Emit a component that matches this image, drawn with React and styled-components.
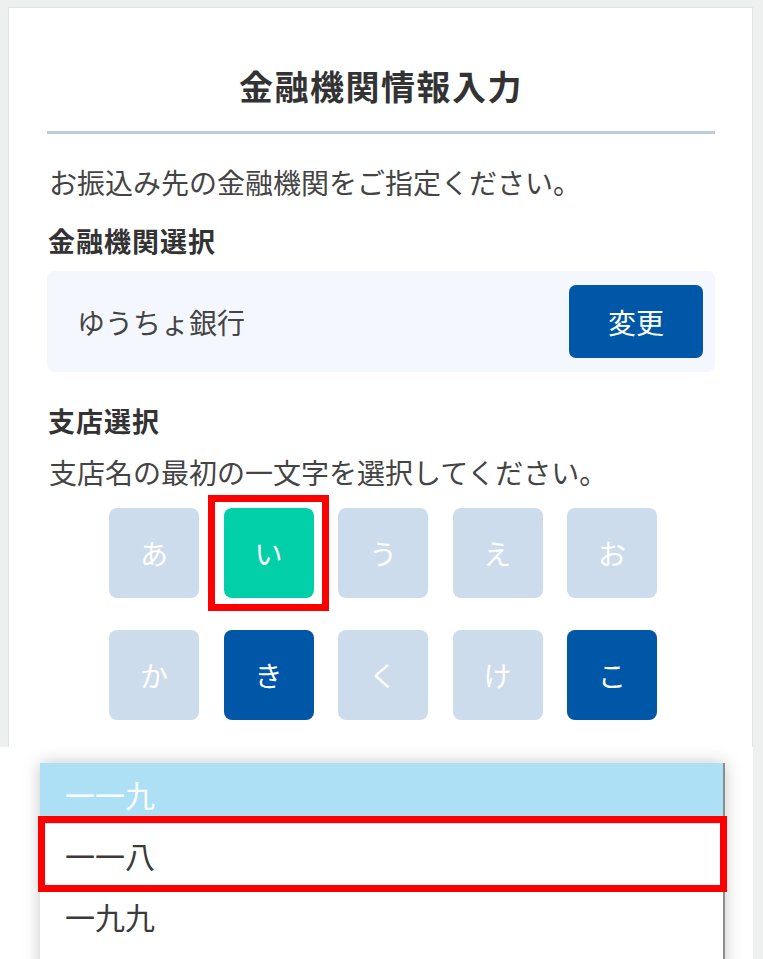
import React, { useState } from "react";
import styled, { createGlobalStyle } from "styled-components";

const GlobalStyle = createGlobalStyle`
  html, body {
    margin: 0;
    padding: 0;
    background: #eef0ef;
    font-family: "Noto Sans CJK JP", "Noto Sans", sans-serif;
    color: #3a3a3a;
  }
  * {
    box-sizing: border-box;
  }
`;

const Page = styled.div`
  position: relative;
  min-height: 100vh;
  padding: 7px 10px 0 8px;
  overflow: hidden;
`;

const Card = styled.div`
  background: #ffffff;
  border: 1px solid #e1e4e3;
  border-bottom: none;
  min-height: calc(100vh - 7px);
  padding: 56px 37px 0 38px;
  display: flex;
  flex-direction: column;
`;

const Title = styled.h1`
  margin: 0;
  font-size: 34px;
  line-height: 44px;
  font-weight: 700;
  letter-spacing: 1.5px;
  text-align: center;
  color: #333333;
  padding-bottom: 23px;
  border-bottom: 3px solid #b8ccdc;
`;

const Text = styled.p`
  margin: ${(p) => p.$top}px 0 0 2px;
  font-size: 28px;
  line-height: 40px;
  color: #444444;
`;

const Label = styled.h2`
  margin: ${(p) => p.$top}px 0 0 1px;
  font-size: 27px;
  line-height: 40px;
  font-weight: 700;
  letter-spacing: 1px;
  color: #333333;
`;

const BankBox = styled.div`
  margin-top: 10px;
  height: 101px;
  background: #f4f7fd;
  border-radius: 8px;
  display: flex;
  align-items: center;
  justify-content: space-between;
  padding: 0 12px 0 30px;
`;

const BankName = styled.span`
  font-size: 28px;
  line-height: 40px;
  color: #444444;
`;

const ChangeButton = styled.button`
  width: 134px;
  height: 73px;
  border: none;
  border-radius: 7px;
  background: #0057a8;
  color: #ffffff;
  font-family: inherit;
  font-size: 28px;
  cursor: pointer;
`;

const KanaGrid = styled.div`
  margin: 16px 0 0 62px;
  display: grid;
  grid-template-columns: repeat(5, 90px);
  column-gap: 24.5px;
  row-gap: 32px;
`;

const KanaCell = styled.div`
  position: relative;
`;

const colors = {
  off: "#cddcec",
  on: "#00cfa7",
  has: "#0057a8",
};

const KanaButton = styled.button`
  width: 90px;
  height: 90px;
  border: none;
  border-radius: 8px;
  background: ${(p) => colors[p.$state]};
  color: #ffffff;
  font-family: inherit;
  font-size: 28px;
  cursor: pointer;
`;

const Highlight = styled.span`
  position: absolute;
  z-index: 2;
  top: ${(p) => p.$t}px;
  right: ${(p) => p.$r}px;
  bottom: ${(p) => p.$b}px;
  left: ${(p) => p.$l}px;
  border: 7px solid #ff0000;
  pointer-events: none;
`;

const Overlay = styled.div`
  position: absolute;
  top: 747px;
  left: 0;
  right: 10px;
  bottom: 0;
  background: #ffffff;
  padding: 16px 0 0 40px;
`;

const List = styled.ul`
  margin: 0;
  padding: 0;
  list-style: none;
  width: 685px;
  height: 260px;
  background: #ffffff;
  border-right: 2px solid #8c8c8c;
  box-shadow: 0 0 16px rgba(0, 0, 0, 0.22);
`;

const Option = styled.li`
  position: relative;
  height: 61px;
  padding: 1px 0 0 25px;
  display: flex;
  align-items: center;
  font-size: 30px;
  line-height: 40px;
  background: ${(p) => (p.$active ? "#ade0f4" : "#ffffff")};
  color: ${(p) => (p.$active ? "#ffffff" : "#3a3a3a")};
`;

const kana = [
  ["あ", "off"],
  ["い", "on"],
  ["う", "off"],
  ["え", "off"],
  ["お", "off"],
  ["か", "off"],
  ["き", "has"],
  ["く", "off"],
  ["け", "off"],
  ["こ", "has"],
];

const branches = ["一一九", "一一八", "一九九"];

const App = () => {
  const [selected, setSelected] = useState("い");

  return (
    <Page>
      <GlobalStyle />
      <Card>
        <Title>金融機関情報入力</Title>
        <Text $top={28}>お振込み先の金融機関をご指定ください。</Text>
        <Label $top={19}>金融機関選択</Label>
        <BankBox>
          <BankName>ゆうちょ銀行</BankName>
          <ChangeButton>変更</ChangeButton>
        </BankBox>
        <Label $top={29}>支店選択</Label>
        <Text $top={11}>支店名の最初の一文字を選択してください。</Text>
        <KanaGrid>
          {kana.map(([k, state]) => (
            <KanaCell key={k}>
              <KanaButton
                $state={k === selected ? "on" : state === "on" ? "off" : state}
                onClick={() => setSelected(k)}
              >
                {k}
              </KanaButton>
              {k === "い" && <Highlight $t={-13} $r={-15} $b={-13} $l={-16} />}
            </KanaCell>
          ))}
        </KanaGrid>
      </Card>
      <Overlay>
        <List>
          {branches.map((b, i) => (
            <Option key={b} $active={i === 0}>
              {b}
              {i === 1 && <Highlight $t={-8} $r={-4} $b={-7} $l={-2} />}
            </Option>
          ))}
        </List>
      </Overlay>
    </Page>
  );
};

export default App;
